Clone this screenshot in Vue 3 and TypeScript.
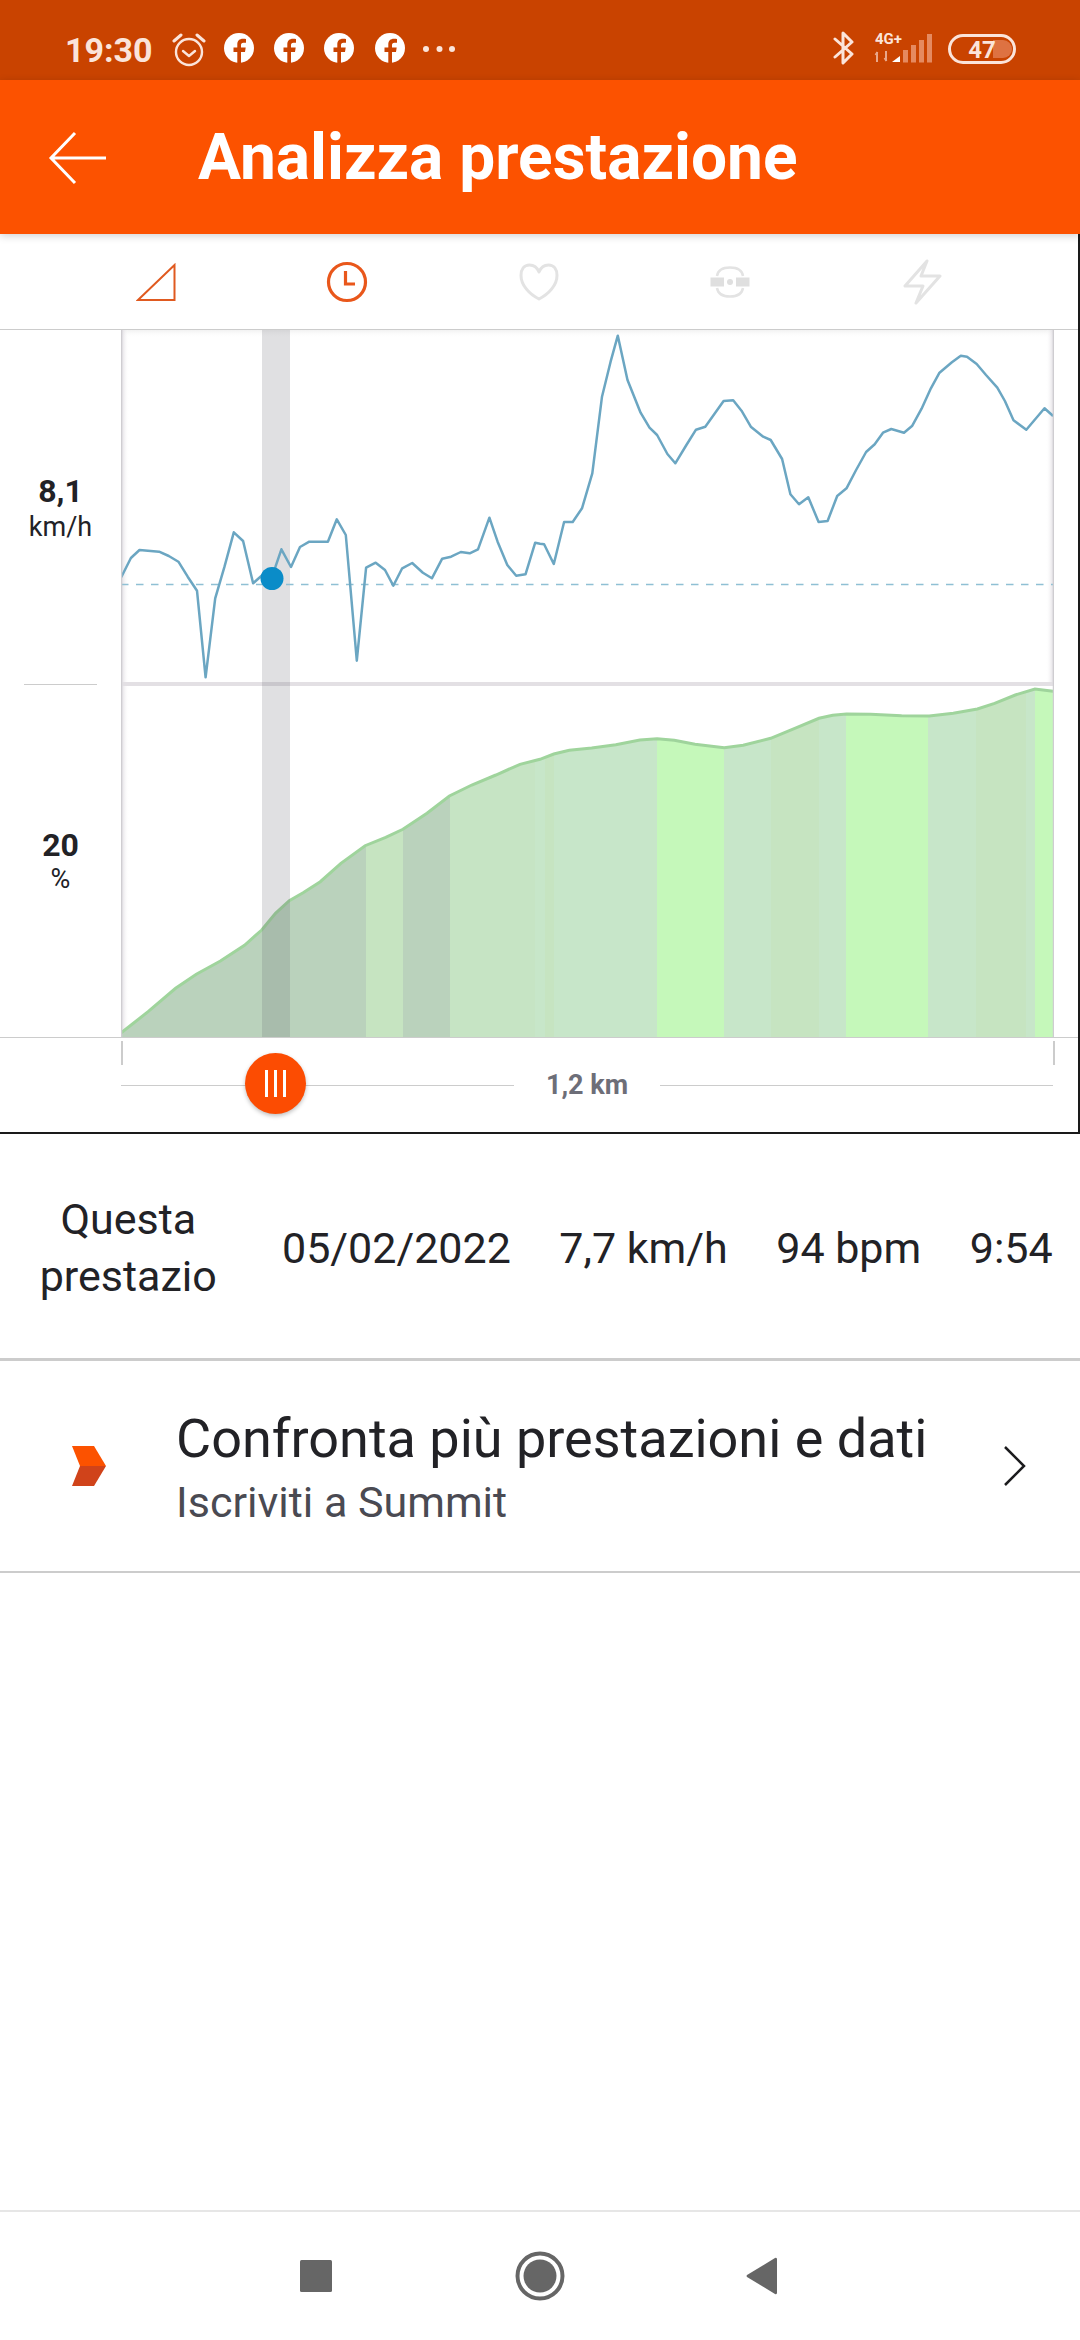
<script setup lang="ts">
// curve samples are read off the chart, in page pixels once converted
type Pt = [number, number]

const speedLeft: Pt[] = [[352,772],[380,714],[405,690],[462,695],[490,708],[518,725],[545,770],[572,812],[597,1072],[625,835],[652,740],[679,637],[706,663],[735,790],[762,765],[790,760],[800,740],[817,688],[845,741],[871,681],[898,665],[952,665],[978,598],[1004,645],[1036,1022],[1063,743],[1091,728],[1118,750],[1142,797],[1168,745],[1197,729],[1228,758],[1254,775],[1284,716],[1310,710],[1338,696],[1364,700],[1388,688],[1421,593],[1445,665],[1473,735],[1499,767],[1526,763],[1554,668]]
const speedRight: Pt[] = [[0,671],[12,673],[40,732],[70,606],[95,606],[122,565],[152,460],[180,230],[205,125],[226,47],[254,180],[292,278],[318,323],[340,345],[370,402],[393,430],[425,375],[453,329],[480,320],[533,243],[561,241],[585,272],[612,320],[648,350],[670,360],[703,417],[727,523],[752,553],[779,532],[809,606],[835,603],[863,528],[890,505],[918,450],[947,396],[972,373],[996,338],[1020,327],[1057,338],[1081,317],[1108,266],[1135,205],[1160,158],[1196,127],[1222,107],[1240,110],[1268,132],[1295,165],[1328,203],[1350,243],[1375,301],[1412,329],[1465,265],[1490,288]]
const gradeLeft: Pt[] = [[352,1088],[430,1025],[510,955],[570,913],[640,873],[710,826],[760,780],[800,730],[840,692],[880,668],[930,635],[990,580],[1060,527],[1120,502],[1170,478],[1240,430],[1305,378],[1370,345],[1440,315],[1510,283]]
const gradeRight: Pt[] = [[0,268],[40,252],[85,241],[150,234],[220,224],[290,210],[340,206],[390,211],[450,223],[535,233],[590,226],[670,205],[740,175],[810,145],[850,136],[890,132],[960,133],[1050,137],[1130,138],[1200,130],[1270,117],[1320,100],[1380,75],[1437,57],[1490,64]]

const SCALE_X = 1568 / 540

function toPage(list: Pt[], offX: number, offY: number): Pt[] {
  return list.map(([x, y]) => [+(offX + x / SCALE_X).toFixed(1), +(offY + y / 3).toFixed(1)] as Pt)
}

function join(list: Pt[]): string {
  return list.map((p) => p.join(',')).join(' ')
}

const speedLine = join([...toPage(speedLeft, 0, 320), ...toPage(speedRight, 540, 320)])
const gradePts = [...toPage(gradeLeft, 0, 670), ...toPage(gradeRight, 540, 670)]
const gradeLine = join(gradePts)
const gradeArea = join([[121, 1038], ...gradePts, [1053, 1038]])

const DARK = '#bad2bc'
const MID = '#c7e6c9'
const TAN = '#c6e4c1'
const SOFT = '#c6e4c4'
const LIME = '#c5f8ba'

const bands: { x: number; w: number; fill: string }[] = [
  { x: 121, w: 245, fill: DARK },
  { x: 366, w: 37, fill: TAN },
  { x: 403, w: 47, fill: DARK },
  { x: 450, w: 85, fill: SOFT },
  { x: 535, w: 10, fill: MID },
  { x: 545, w: 9, fill: TAN },
  { x: 554, w: 103, fill: MID },
  { x: 657, w: 67, fill: LIME },
  { x: 724, w: 47, fill: MID },
  { x: 771, w: 48, fill: TAN },
  { x: 819, w: 27, fill: MID },
  { x: 846, w: 82, fill: LIME },
  { x: 928, w: 48, fill: MID },
  { x: 976, w: 50, fill: TAN },
  { x: 1026, w: 9, fill: MID },
  { x: 1035, w: 19, fill: LIME },
]

const stats = ['05/02/2022', '7,7 km/h', '94 bpm', '9:54']
const fbIcons = [1, 2, 3, 4]
</script>

<template>
  <div class="screen">
    <div class="status-bar">
      <span class="clock">19:30</span>
      <svg class="alarm" width="34" height="36" viewBox="0 0 34 36" fill="none" stroke="#fbe4da" stroke-width="2.4">
        <circle cx="17" cy="20" r="13" />
        <path d="M11 19l6 5 6-5" stroke-linecap="round" stroke-linejoin="round" />
        <path d="M2 9l7-6M32 9l-7-6" stroke-linecap="round" stroke-width="3" />
      </svg>
      <div class="fb-row">
        <svg v-for="n in fbIcons" :key="n" width="30" height="30" viewBox="0 0 30 30">
          <circle cx="15" cy="15" r="15" fill="#fff" />
          <path d="M17 30V19h4l.7-4.5H17V12c0-1.3.6-2.3 2.4-2.3H22V5.9c-.8-.1-1.9-.2-3-.2-3.6 0-5.7 2.1-5.7 5.8v3H9.5V19h3.8v11z" fill="#c94300" />
        </svg>
      </div>
      <svg class="dots" width="34" height="8" viewBox="0 0 34 8" fill="#fbe4da">
        <circle cx="4" cy="4" r="3" />
        <circle cx="17.500" cy="4" r="3" />
        <circle cx="30" cy="4" r="3" />
      </svg>
      <svg class="status-right" width="183" height="80" viewBox="833 0 183 80">
        <path d="M835 39l17 15-9 9V33l9 9-17 15" fill="none" stroke="#fbe4da" stroke-width="3" stroke-linejoin="round" stroke-linecap="round" />
        <text x="875" y="44" class="net">4G+</text>
        <path d="M877 52v10M875.500 55l2-3M886 51v10M884.500 58l2 3" stroke="#e9a78a" stroke-width="2" fill="none" />
        <path d="M892 62l8-6v6z" fill="#fff" />
        <g fill="#e58a60">
          <rect x="903" y="50" width="5" height="12.500" />
          <rect x="911" y="45" width="5" height="17.500" />
          <rect x="919" y="40" width="5" height="22.500" />
          <rect x="927" y="34" width="5" height="28.500" />
        </g>
        <rect x="949.500" y="35.500" width="65" height="27" rx="13.500" fill="none" stroke="#fbe4da" stroke-width="3" />
        <path d="M993 40h10a9 9 0 0 1 0 18h-10z" fill="#de7242" />
        <text x="982" y="58" class="batt">47</text>
      </svg>
    </div>

    <header class="app-bar">
      <svg class="back" width="60" height="54" viewBox="0 0 60 54" fill="none" stroke="#fff" stroke-width="3">
        <path d="M27 2L3 27l24 25M3 27h55" />
      </svg>
      <h1 class="title">Analizza prestazione</h1>
    </header>

    <div class="panel">
      <nav class="tabs">
        <div class="tab">
          <svg width="40" height="38" viewBox="0 0 40 38" fill="none" stroke="#e05a20" stroke-width="2">
            <path d="M38.500 2v35H2z" />
          </svg>
        </div>
        <div class="tab">
          <svg width="42" height="42" viewBox="0 0 42 42" fill="none" stroke="#e9571b" stroke-width="3.200">
            <circle cx="21" cy="21" r="18.500" />
            <path d="M19.500 10v13h9.500" />
          </svg>
        </div>
        <div class="tab">
          <svg width="40" height="38" viewBox="0 0 40 38" fill="none" stroke="#e3e3e3" stroke-width="3">
            <path d="M20 9C18 4 14 2 10.500 2 5 2 2 6.500 2 12.500 2 22 10 31 20 36 30 31 38 22 38 12.500 38 6.500 35 2 29.500 2 26 2 22 4 20 9z" stroke-linejoin="round" />
          </svg>
        </div>
        <div class="tab">
          <svg width="40" height="32" viewBox="0 0 40 32" fill="none" stroke="#e3e3e3" stroke-width="2.500">
            <path d="M7 10C8 4 13 1.500 20 1.500S32 4 33 10M7 22c1 6 6 8.500 13 8.500S32 28 33 22" />
            <rect x="0.500" y="11.500" width="13.500" height="9" fill="#dfdfdf" stroke="none" />
            <rect x="26" y="11.500" width="13.500" height="9" fill="#dfdfdf" stroke="none" />
            <circle cx="20" cy="16" r="3" fill="#dfdfdf" stroke="none" />
          </svg>
        </div>
        <div class="tab">
          <svg width="40" height="46" viewBox="0 0 40 46" fill="none" stroke="#e3e3e3" stroke-width="3" stroke-linejoin="round">
            <path d="M25 2L3 27h18l-7 17 24-27H19z" />
          </svg>
        </div>
      </nav>

      <div class="chart-row">
        <div class="axis-labels">
          <div class="axis-cell speed">
            <strong>8,1</strong>
            <span>km/h</span>
          </div>
          <div class="axis-rule"></div>
          <div class="axis-cell grade">
            <strong>20</strong>
            <span>%</span>
          </div>
        </div>
        <svg class="plot" width="933" height="708" viewBox="121 330 933 708">
          <defs>
            <linearGradient id="edgeL" x1="0" x2="1" y1="0" y2="0">
              <stop offset="0" stop-color="#dcd8de" stop-opacity=".8" />
              <stop offset="1" stop-color="#fff" stop-opacity="0" />
            </linearGradient>
            <linearGradient id="edgeR" x1="1" x2="0" y1="0" y2="0">
              <stop offset="0" stop-color="#dcd8de" stop-opacity=".8" />
              <stop offset="1" stop-color="#fff" stop-opacity="0" />
            </linearGradient>
            <linearGradient id="edgeT" x1="0" x2="0" y1="0" y2="1">
              <stop offset="0" stop-color="#e4e4e4" stop-opacity=".5" />
              <stop offset="1" stop-color="#fff" stop-opacity="0" />
            </linearGradient>
            <clipPath id="areaClip">
              <polygon :points="gradeArea" />
            </clipPath>
          </defs>

          <rect x="121" y="330" width="933" height="8" fill="url(#edgeT)" />
          <rect x="122" y="330" width="7" height="708" fill="url(#edgeL)" />
          <rect x="1046" y="330" width="7" height="354" fill="url(#edgeR)" />

          <g clip-path="url(#areaClip)">
            <rect v-for="b in bands" :key="b.x" :x="b.x" y="680" :width="b.w" height="358" :fill="b.fill" />
          </g>
          <polyline :points="gradeLine" fill="none" stroke="#9fd49c" stroke-width="3" />

          <rect x="121" y="682" width="933" height="4" fill="#e3e0e4" />
          <rect x="262" y="330" width="28" height="708" fill="#64646e" fill-opacity=".2" />

          <line x1="121" y1="584.500" x2="1053" y2="584.500" stroke="#8fc0d4" stroke-width="1.500" stroke-dasharray="7.500 7.500" />
          <polyline :points="speedLine" fill="none" stroke="#6ba6c2" stroke-width="2.500" stroke-linejoin="round" />
          <circle cx="272" cy="578.500" r="11.500" fill="#0a8cc8" />

          <line x1="121.500" y1="330" x2="121.500" y2="1038" stroke="#cfcdd1" stroke-width="1.500" />
          <line x1="1053.500" y1="330" x2="1053.500" y2="1038" stroke="#cfcdd1" stroke-width="1.500" />
        </svg>
      </div>

      <div class="slider">
        <div class="tick left"></div>
        <div class="tick right"></div>
        <div class="track"></div>
        <span class="distance">1,2 km</span>
        <div class="track"></div>
        <div class="thumb">
          <i></i><i></i><i></i>
        </div>
      </div>
    </div>

    <div class="stats-row">
      <div class="stats-name">Questa<br />prestazio</div>
      <span v-for="s in stats" :key="s" class="stat">{{ s }}</span>
    </div>

    <div class="promo">
      <svg class="promo-logo" width="34" height="40" viewBox="0 0 34 40">
        <path d="M0 0h22l12 20H8z" fill="#fc5200" />
        <path d="M8 20h26L22 40H0z" fill="#d0431a" />
      </svg>
      <div class="promo-text">
        <div class="promo-title">Confronta più prestazioni e dati</div>
        <div class="promo-sub">Iscriviti a Summit</div>
      </div>
      <svg class="promo-arrow" width="22" height="40" viewBox="0 0 22 40" fill="none" stroke="#1c1c1e" stroke-width="2.500">
        <path d="M1 1l19 19L1 39" />
      </svg>
    </div>

    <div class="spacer"></div>

    <footer class="nav-bar">
      <svg width="32" height="32" viewBox="0 0 32 32"><rect width="32" height="32" rx="1.500" fill="#666" /></svg>
      <svg class="nav-home" width="50" height="50" viewBox="0 0 50 50">
        <circle cx="25" cy="25" r="22.500" fill="none" stroke="#666" stroke-width="4" />
        <circle cx="25" cy="25" r="16.500" fill="#666" />
      </svg>
      <svg class="nav-back" width="31" height="38" viewBox="0 0 31 38">
        <path d="M31 2v34a1.500 1.500 0 0 1-2 1L1 20a1.500 1.500 0 0 1 0-2L29 1a1.500 1.500 0 0 1 2 1z" fill="#666" />
      </svg>
    </footer>
  </div>
</template>

<style>
html,
body {
  margin: 0;
  background: #fff;
}
</style>

<style scoped>
.screen {
  width: 1080px;
  height: 2340px;
  display: flex;
  flex-direction: column;
  background: #fff;
  font-family: Roboto, "Liberation Sans", sans-serif;
  color: #222226;
  overflow: hidden;
}

.status-bar {
  height: 80px;
  flex: none;
  box-sizing: border-box;
  display: flex;
  align-items: center;
  padding: 18px 0 0 65px;
  background: #c94300;
}

.clock {
  font-size: 34px;
  font-weight: 700;
  color: #fbe4da;
  margin-top: 2px;
}

.alarm {
  margin-left: 19px;
  margin-top: 2px;
}

.fb-row {
  display: flex;
  gap: 20.4px;
  margin-left: 18px;
  margin-top: -2px;
}

.dots {
  margin-left: 17px;
}

.status-right {
  align-self: flex-start;
  margin-top: -18px;
  margin-left: auto;
  margin-right: 64px;
}

.net {
  font-size: 15px;
  font-weight: 700;
  fill: #fbe4da;
}

.batt {
  font-size: 24px;
  font-weight: 700;
  fill: #fbe4da;
  text-anchor: middle;
}

.app-bar {
  height: 154px;
  flex: none;
  display: flex;
  align-items: center;
  background: #fc5200;
  box-shadow: 0 2px 8px rgba(0, 0, 0, 0.18);
  position: relative;
  z-index: 1;
}

.back {
  margin-left: 48px;
  margin-top: 1px;
}

.title {
  margin: 0 0 0 90px;
  font-size: 64px;
  font-weight: 700;
  color: #fff;
}

.panel {
  height: 900px;
  flex: none;
  box-sizing: border-box;
  border-right: 2px solid #1a1a1a;
  border-bottom: 2px solid #1a1a1a;
}

.tabs {
  height: 96px;
  box-sizing: border-box;
  padding-left: 60px;
  display: grid;
  grid-template-columns: repeat(5, 191.5px);
  border-bottom: 1.5px solid #ccc;
}

.tab {
  display: flex;
  align-items: center;
  justify-content: center;
  padding-top: 1px;
}

.chart-row {
  display: flex;
  height: 708px;
}

.axis-labels {
  width: 121px;
  flex: none;
  position: relative;
  display: flex;
  flex-direction: column;
}

.axis-cell {
  flex: 1;
  display: flex;
  flex-direction: column;
  align-items: center;
  text-align: center;
}

.axis-cell strong {
  font-size: 32px;
  line-height: 36px;
  font-weight: 700;
}

.axis-cell span {
  font-size: 27px;
  line-height: 36px;
}

.axis-cell.speed {
  padding-top: 143px;
}

.axis-cell.grade {
  padding-top: 142px;
}

.axis-cell.grade span {
  line-height: 33px;
}

.axis-rule {
  height: 1px;
  margin: 0 24px;
  background: #ccc;
}

.plot {
  flex: none;
  display: block;
}

.slider {
  position: relative;
  height: 94px;
  box-sizing: border-box;
  padding: 0 25px 0 121px;
  border-top: 1.5px solid #ccc;
  display: flex;
  align-items: center;
  gap: 32px;
  margin-top: -1px;
}

.track {
  flex: 1;
  height: 1.5px;
  background: #ccc;
  margin-top: 2px;
}

.distance {
  font-size: 27px;
  font-weight: 700;
  color: #6d6e78;
}

.tick {
  position: absolute;
  top: 3px;
  width: 1.5px;
  height: 24px;
  background: #ccc;
}

.tick.left {
  left: 121px;
}

.tick.right {
  left: 1053px;
}

.thumb {
  position: absolute;
  left: 245px;
  top: 15px;
  width: 61px;
  height: 61px;
  border-radius: 50%;
  background: #fc4c02;
  box-shadow: 0 2px 4px rgba(0, 0, 0, 0.25);
  display: flex;
  align-items: center;
  justify-content: center;
  gap: 6.5px;
}

.thumb i {
  width: 2.5px;
  height: 27px;
  background: #fff;
}

.stats-row {
  height: 227px;
  flex: none;
  box-sizing: border-box;
  padding: 3px 0 0 23px;
  display: flex;
  align-items: center;
  gap: 48.5px;
  font-size: 43px;
  border-bottom: 3px solid #ccc;
}

.stats-name {
  width: 210.5px;
  text-align: center;
  line-height: 57px;
  white-space: nowrap;
}

.stat {
  white-space: nowrap;
}

.promo {
  height: 212px;
  flex: none;
  box-sizing: border-box;
  display: flex;
  align-items: center;
  border-bottom: 2px solid #ccc;
}

.promo-logo {
  margin-left: 72px;
  flex: none;
}

.promo-text {
  margin-left: 70px;
  padding-top: 4px;
}

.promo-title {
  font-size: 54px;
  line-height: 62px;
}

.promo-sub {
  font-size: 43px;
  line-height: 52px;
  color: #4a4a52;
  margin-top: 6px;
}

.promo-arrow {
  margin-left: auto;
  margin-right: 54px;
}

.spacer {
  flex: 1;
}

.nav-bar {
  height: 130px;
  flex: none;
  box-sizing: border-box;
  border-top: 2px solid #e6e6e6;
  padding-left: 300px;
  display: flex;
  align-items: center;
}

.nav-home {
  margin-left: 183px;
}

.nav-back {
  margin-left: 181px;
}
</style>
